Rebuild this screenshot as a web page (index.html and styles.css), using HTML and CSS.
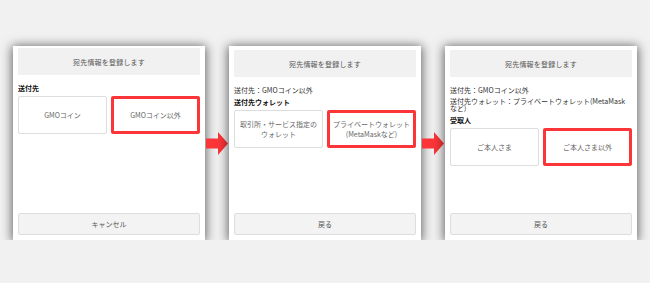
FILE: index.html
```html
<!DOCTYPE html>
<html lang="ja">
  <head>
    <meta charset="UTF-8" />
    <meta name="viewport" content="width=device-width, initial-scale=1.0" />
    <title>宛先情報の登録</title>
    <link rel="stylesheet" href="styles.css">
  </head>
  <body>
    <div class="steps">
      <div class="screen screen-first">
        <div class="screen-head">宛先情報を登録します</div>
        <p class="label">送付先</p>
        <div class="choices">
          <div class="choice">GMOコイン</div>
          <div class="choice choice-on">GMOコイン以外</div>
        </div>
        <div class="screen-foot">キャンセル</div>
      </div>

      <div class="arrow">
        <svg width="22" height="23" viewBox="0 0 22 23"><path d="M0 6.5H12V0L22 11.5L12 23V16.5H0Z" fill="#fb3538"/></svg>
      </div>

      <div class="screen">
        <div class="screen-head">宛先情報を登録します</div>
        <p class="info">送付先：GMOコイン以外</p>
        <p class="label">送付先ウォレット</p>
        <div class="choices">
          <div class="choice">取引所・サービス指定の<br>ウォレット</div>
          <div class="choice choice-on">プライベートウォレット<br>(MetaMaskなど)</div>
        </div>
        <div class="screen-foot">戻る</div>
      </div>

      <div class="arrow">
        <svg width="22" height="23" viewBox="0 0 22 23"><path d="M0 6.5H12V0L22 11.5L12 23V16.5H0Z" fill="#fb3538"/></svg>
      </div>

      <div class="screen">
        <div class="screen-head">宛先情報を登録します</div>
        <p class="info">送付先：GMOコイン以外</p>
        <p class="info info-tight">送付先ウォレット：プライベートウォレット(MetaMaskなど)</p>
        <p class="label">受取人</p>
        <div class="choices">
          <div class="choice">ご本人さま</div>
          <div class="choice choice-on">ご本人さま以外</div>
        </div>
        <div class="screen-foot">戻る</div>
      </div>
    </div>
  </body>
</html>
```

FILE: styles.css
```css
* {
  box-sizing: border-box;
}
body {
  margin: 0;
  padding: 0;
  background: #f1f1f1;
  font-family: "Noto Sans CJK JP", sans-serif;
  font-size: 7px;
  color: #333;
}
.steps {
  display: flex;
  align-items: center;
  padding: 46px 13px 0;
}
.screen {
  width: 192px;
  height: 194px;
  flex: none;
  display: flex;
  flex-direction: column;
  padding: 4px 5px 5px;
  background: #fff;
  box-shadow: 0 1px 10px 1px rgba(0, 0, 0, 0.6);
}
.screen-first {
  padding-top: 2px;
}
.arrow {
  width: 24px;
  flex: none;
  display: flex;
  justify-content: center;
}
.arrow svg {
  display: block;
}
.screen-head {
  height: 27px;
  flex: none;
  display: flex;
  align-items: center;
  justify-content: center;
  background: #f1f1f1;
  color: #555;
  letter-spacing: 0.2px;
  margin-bottom: 9px;
}
.info,
.label {
  margin: 0 0 4px;
  line-height: 8px;
}
.info {
  color: #333;
}
.info-tight {
  line-height: 7px;
}
.label {
  font-weight: bold;
  color: #111;
}
.choices {
  display: grid;
  grid-template-columns: 1fr 1fr;
  gap: 4px;
}
.choice {
  height: 38px;
  display: flex;
  align-items: center;
  justify-content: center;
  text-align: center;
  line-height: 10px;
  color: #666;
  border: 1px solid #ddd;
  border-radius: 2px;
}
.choice-on {
  border: 3px solid #fb3538;
}
.screen-foot {
  margin-top: auto;
  height: 22px;
  flex: none;
  display: flex;
  align-items: center;
  justify-content: center;
  background: #f3f3f3;
  border: 1px solid #ddd;
  border-radius: 2px;
  color: #555;
}
```
